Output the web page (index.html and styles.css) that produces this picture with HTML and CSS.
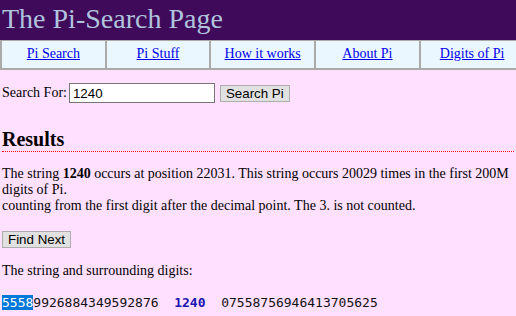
FILE: index.html
```html
<!DOCTYPE html>
<html lang="en">
<head>
    <meta charset="UTF-8">
    <title>The Pi-Search Page</title>
    <link rel="stylesheet" href="styles.css">
</head>
<body>
<div class="title">The Pi-Search Page</div>
<div class="nav">
    <div class="nav-cell"><a href="#">Pi Search</a></div>
    <div class="nav-cell"><a href="#">Pi Stuff</a></div>
    <div class="nav-cell"><a href="#">How it works</a></div>
    <div class="nav-cell"><a href="#">About Pi</a></div>
    <div class="nav-cell"><a href="#">Digits of Pi</a></div>
</div>
<div class="main">
    <form class="search">
        <label for="query">Search For:</label>
        <input id="query" class="query" type="text" value="1240">
        <button type="button" class="btn">Search Pi</button>
    </form>

    <h2 class="results">Results</h2>
    <p class="summary">The string <b>1240</b> occurs at position 22031. This string occurs 20029 times in the first 200M digits of Pi.<br>
        counting from the first digit after the decimal point. The 3. is not counted.</p>

    <button type="button" class="btn next">Find Next</button>

    <p class="caption">The string and surrounding digits:</p>
    <div class="digits"><span class="sel">5558</span>9926884349592876  <b class="hit">1240</b>  07558756946413705625</div>
</div>
</body>
</html>
```

FILE: styles.css
```css
html * {
    box-sizing: border-box;
}

body {
    margin: 0;
    background: #ffe0ff;
    color: #000;
    font-family: "Liberation Serif", "Times New Roman", serif;
    font-size: 14px;
    line-height: 16px;
}

.title {
    height: 40px;
    padding: 0 2px;
    background: #3f0a5a;
    color: #b0c4de;
    font-size: 28px;
    line-height: 37px;
}

.nav {
    display: flex;
    overflow: hidden;
    border-top: 1px solid #aaa;
    border-bottom: 2px solid #aaa;
}

.nav-cell {
    flex: 0 0 104.7px;
    border-left: 2px solid #aaa;
    background: #eaf7ff;
    text-align: center;
    padding: 4px 0 5px;
    line-height: 18px;
}

.nav-cell a {
    color: #0000ee;
}

.main {
    padding: 0 2px;
}

.search {
    display: flex;
    align-items: center;
    margin: 13px 0 0;
}

.search label {
    margin-right: 2px;
}

.query {
    width: 146px;
    height: 20px;
    border: 1px solid #767676;
    padding: 1px 3px;
    font-family: "Liberation Sans", Arial, sans-serif;
    font-size: 13.33px;
    background: #fff;
}

.btn {
    height: 17px;
    padding: 0 5px;
    border: 1px solid #adadad;
    background: #e1e1e1;
    color: #000;
    font-family: "Liberation Sans", Arial, sans-serif;
    font-size: 13.33px;
    line-height: 15px;
}

.search .btn {
    margin-left: 5px;
}

.results {
    margin: 25px 0 0;
    font-size: 20px;
    line-height: 23px;
    border-bottom: 1px dotted #f00;
}

.summary {
    margin: 14px 0 0;
}

.next {
    display: block;
    margin-top: 17px;
}

.caption {
    margin: 15px 0 0;
}

.digits {
    margin-top: 16px;
    white-space: pre;
    font-family: "DejaVu Sans Mono", "Lucida Console", monospace;
    font-size: 13px;
    line-height: 15px;
    color: #111;
}

.sel {
    background: #0078d7;
    color: #fff;
}

.hit {
    color: #1a14b0;
}
```
